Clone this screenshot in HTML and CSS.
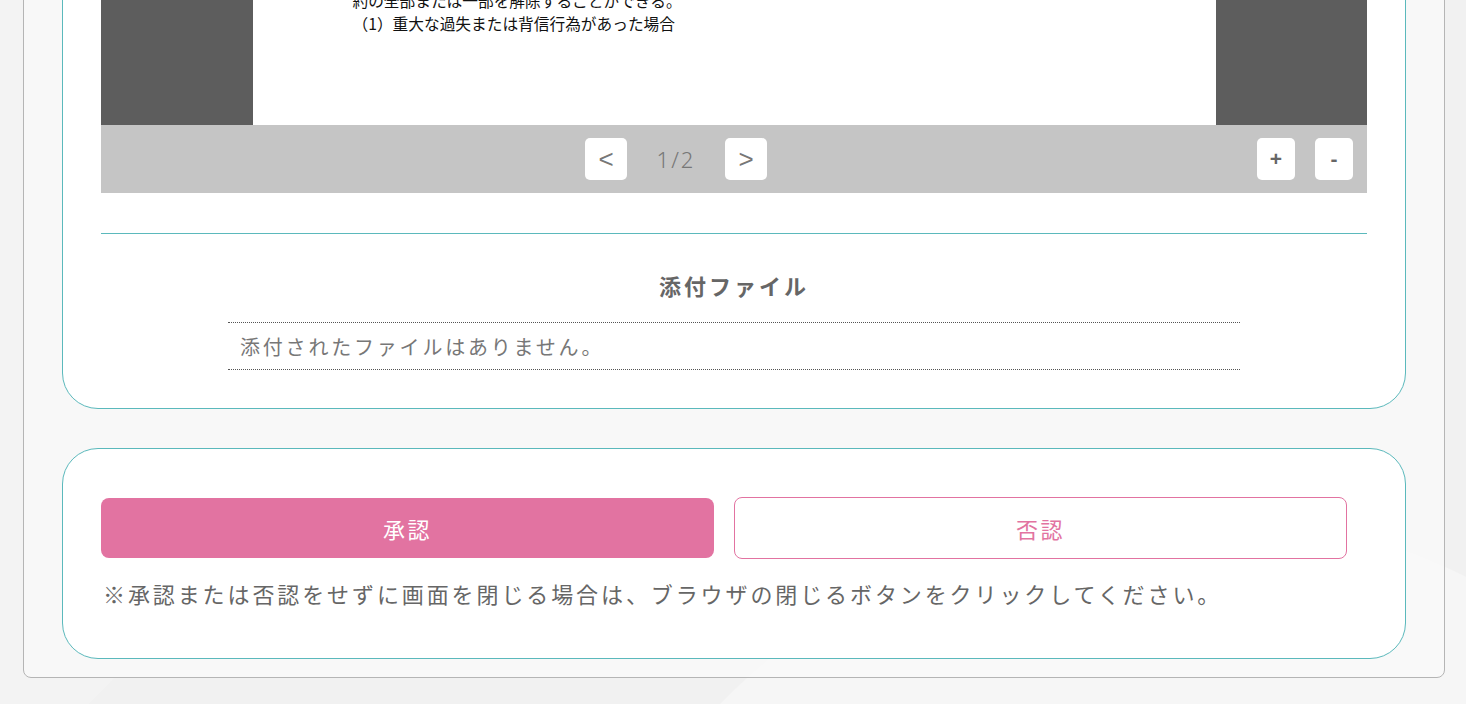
FILE: index.html
```html
<!DOCTYPE html>
<html lang="ja">
<head>
    <meta charset="UTF-8">
    <meta name="viewport" content="width=device-width, initial-scale=1.0">
    <title>承認</title>
    <link rel="stylesheet" href="styles.css">
</head>
<body>
    <div class="page-panel">
        <div class="card">
            <div class="pdf-viewer">
                <div class="pdf-stage">
                    <div class="pdf-page">
                        <p>約の全部または一部を解除することができる。</p>
                        <p>（1）重大な過失または背信行為があった場合</p>
                    </div>
                </div>
                <div class="pdf-toolbar">
                    <div class="pager">
                        <button class="tool-btn nav-btn">&lt;</button>
                        <span class="page-count">1/2</span>
                        <button class="tool-btn nav-btn">&gt;</button>
                    </div>
                    <div class="zoom">
                        <button class="tool-btn zoom-btn">+</button>
                        <button class="tool-btn zoom-btn">-</button>
                    </div>
                </div>
            </div>

            <hr class="divider">

            <h2 class="attach-title">添付ファイル</h2>
            <div class="attach-list">
                <div class="attach-row">添付されたファイルはありません。</div>
            </div>
        </div>

        <div class="card card-actions">
            <div class="action-row">
                <button class="btn btn-approve">承認</button>
                <button class="btn btn-reject">否認</button>
            </div>
            <p class="note">※承認または否認をせずに画面を閉じる場合は、ブラウザの閉じるボタンをクリックしてください。</p>
        </div>
    </div>
</body>
</html>
```

FILE: styles.css
```css
body { margin: 0; padding: 0; font-family: 'Noto Sans CJK JP', 'Noto Sans', sans-serif; color: #666; background-color: #f1f1f1; background-image: radial-gradient(circle at 1180px 1150px, #f6f6f6 0, #f6f6f6 640px, transparent 641px), radial-gradient(circle at -300px 300px, #f3f3f3 0, #f3f3f3 560px, transparent 561px); min-height: 704px; }
.page-panel { margin: -70px 21px 0 23px; padding: 29px 38px 18px 38px; background-color: rgba(250,250,250,0.75); border: 1px solid #b5b5b5; border-radius: 0 0 8px 8px; }
.card { background-color: #fff; border: 1px solid #5bb9bc; border-radius: 36px; padding: 39px 38px 38px 38px; }
.card + .card { margin-top: 39px; }

.pdf-viewer { width: 100%; }
.pdf-stage { height: 125px; background-color: #5d5d5d; display: flex; justify-content: center; overflow: hidden; }
.pdf-page { width: 963px; background-color: #fff; padding: 0 100px; box-sizing: border-box; }
.pdf-page p { margin: 0; font-size: 15.7px; line-height: 23px; color: #111; }
.pdf-page p:first-child { margin-top: -11px; }
.pdf-toolbar { height: 68px; background-color: #c5c5c5; display: flex; align-items: center; padding: 0 14px 0 484px; }
.pager { display: flex; align-items: center; }
.zoom { display: flex; gap: 20px; margin-left: auto; }
.tool-btn { border: none; background-color: #fff; border-radius: 5px; height: 42px; padding: 0; font-family: 'Liberation Sans', sans-serif; color: #777; cursor: pointer; display: flex; align-items: center; justify-content: center; }
.nav-btn { width: 42px; font-size: 26px; font-weight: 300; }
.zoom-btn { width: 38px; font-size: 21px; font-weight: 700; color: #666; }
.page-count { width: 98px; text-align: center; font-family: 'Noto Sans', sans-serif; font-size: 22px; font-weight: 300; color: #777; letter-spacing: 2px; }

.divider { border: none; border-top: 1px solid #5bb9bc; margin: 40px 0 0 0; height: 0; }
.attach-title { margin: 35px 0 0 0; font-size: 22px; line-height: 32px; font-weight: 700; text-align: center; color: #666; letter-spacing: 3px; }
.attach-list { width: 1012px; margin: 21px auto 0 auto; border-top: 1px dotted #555; border-bottom: 1px dotted #555; }
.attach-row { height: 46px; display: flex; align-items: center; padding-left: 12px; font-size: 20px; color: #777; letter-spacing: 2.8px; }

.card-actions { padding: 48px 38px 49px 38px; }
.action-row { display: grid; grid-template-columns: 1fr 1fr; column-gap: 20px; padding-right: 20px; align-items: center; }
.btn { font-family: 'Noto Sans CJK JP', sans-serif; font-size: 22px; letter-spacing: 2.5px; border-radius: 8px; cursor: pointer; }
.btn-approve { height: 60px; border: none; background-color: #e273a1; color: #fff; }
.btn-reject { height: 62px; border: 1px solid #e273a1; background-color: #fff; color: #e273a1; }
.note { margin: 18px 0 0 2px; font-size: 22px; line-height: 32px; letter-spacing: 2.9px; color: #666; }
```
